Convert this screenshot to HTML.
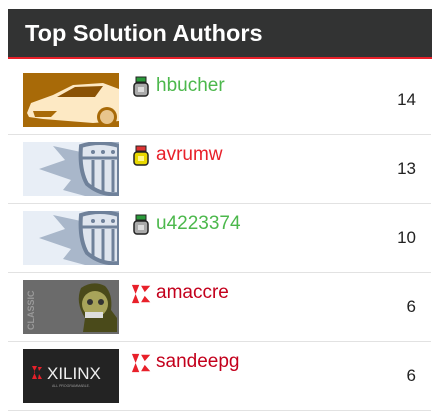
<!DOCTYPE html>
<html><head><style>
body{margin:0;width:441px;height:413px;background:#fff;position:relative;overflow:hidden;font-family:"Liberation Sans",sans-serif}
.hd{position:absolute;left:8px;top:9px;width:424px;height:48px;background:#323333;border-bottom:2px solid #e8202a}
.hd span{position:absolute;left:17px;top:11px;color:#fff;font-weight:bold;font-size:23.5px}
.row{position:absolute;left:8px;width:423px;height:69px;border-bottom:1px solid #e2e2e2}
.av{position:absolute;left:15px;top:8px;width:96px;height:54px;overflow:hidden}
.ic{position:absolute;left:123px;top:11px;width:20px;height:22px}
.nm{position:absolute;left:148px;top:10px;font-size:19px}
.n{position:absolute;right:15px;top:25px;font-size:17px;color:#222}
</style></head><body>
<div class="hd"><span>Top Solution Authors</span></div>

<div class="row" style="top:65px">
<div class="av" style="background:#a86a08"><svg width="96" height="54"><path d="M4 40 L8 30 L30 22 L50 12 L80 10 L96 16 L96 48 L70 50 L20 46 L6 44 Z" fill="#fde9c4"/><path d="M34 24 L52 14 L80 13 L72 24 Z" fill="#8a5205"/><circle cx="84" cy="44" r="10" fill="#a86a08"/><circle cx="84" cy="44" r="7" fill="#e8c58c"/><path d="M10 38 L34 38 L28 44 L12 44Z" fill="#a86a08"/></svg></div>
<svg class="ic" viewBox="0 0 20 22"><rect x="5" y="1" width="10" height="5" fill="#2a9a3a" stroke="#222"/><rect x="3" y="7" width="14" height="13" rx="3" fill="#aaa" stroke="#222" stroke-width="1.5"/><rect x="7" y="11" width="6" height="5" fill="#ddd"/></svg>
<div class="nm" style="color:#4cb84c">hbucher</div><div class="n">14</div></div>

<div class="row" style="top:134px">
<div class="av" style="background:#e8eef6"><svg width="96" height="54"><path d="M16 27 L42 18 L30 4 L58 10 L66 0 L96 0 L96 54 L62 54 L40 48 L48 38 Z" fill="#a9b7ca"/><path d="M58 4 Q77 -2 96 4 L96 52 Q78 54 64 42 Q56 28 58 4Z" fill="#dfe5ee" stroke="#6f819a" stroke-width="4"/><path d="M58 16 L96 16" stroke="#6f819a" stroke-width="3"/><path d="M70 18 V46 M80 18 V50 M90 18 V50" stroke="#6f819a" stroke-width="3"/><circle cx="70" cy="10" r="2" fill="#6f819a"/><circle cx="80" cy="10" r="2" fill="#6f819a"/><circle cx="90" cy="10" r="2" fill="#6f819a"/></svg></div>
<svg class="ic" viewBox="0 0 20 22"><rect x="5" y="1" width="10" height="5" fill="#d33" stroke="#222"/><rect x="3" y="7" width="14" height="13" rx="3" fill="#e8d800" stroke="#222" stroke-width="1.5"/><rect x="7" y="11" width="6" height="5" fill="#fff68a"/></svg>
<div class="nm" style="color:#e8202a">avrumw</div><div class="n">13</div></div>

<div class="row" style="top:203px">
<div class="av" style="background:#e8eef6"><svg width="96" height="54"><path d="M16 27 L42 18 L30 4 L58 10 L66 0 L96 0 L96 54 L62 54 L40 48 L48 38 Z" fill="#a9b7ca"/><path d="M58 4 Q77 -2 96 4 L96 52 Q78 54 64 42 Q56 28 58 4Z" fill="#dfe5ee" stroke="#6f819a" stroke-width="4"/><path d="M58 16 L96 16" stroke="#6f819a" stroke-width="3"/><path d="M70 18 V46 M80 18 V50 M90 18 V50" stroke="#6f819a" stroke-width="3"/><circle cx="70" cy="10" r="2" fill="#6f819a"/><circle cx="80" cy="10" r="2" fill="#6f819a"/><circle cx="90" cy="10" r="2" fill="#6f819a"/></svg></div>
<svg class="ic" viewBox="0 0 20 22"><rect x="5" y="1" width="10" height="5" fill="#2a9a3a" stroke="#222"/><rect x="3" y="7" width="14" height="13" rx="3" fill="#aaa" stroke="#222" stroke-width="1.5"/><rect x="7" y="11" width="6" height="5" fill="#ddd"/></svg>
<div class="nm" style="color:#4cb84c">u4223374</div><div class="n">10</div></div>

<div class="row" style="top:272px">
<div class="av" style="background:#6b6b6b"><svg width="96" height="54"><text x="-50" y="11" transform="rotate(-90)" fill="#999" font-size="9" font-weight="bold" font-family="Liberation Sans">CLASSIC</text><path d="M58 8 Q70 0 82 6 Q90 14 88 30 L94 38 L94 52 L60 52 L62 38 Q52 22 58 8Z" fill="#4a4a1a"/><ellipse cx="72" cy="24" rx="13" ry="13" fill="#a8a45a"/><rect x="62" y="32" width="18" height="6" fill="#ddd"/><circle cx="67" cy="22" r="3" fill="#333"/><circle cx="78" cy="22" r="3" fill="#333"/></svg></div>
<svg class="ic" viewBox="0 0 24 24" style="width:22px;height:22px"><path d="M1 2 L9 2 L5 12 L9 22 L1 22 L5 12Z" fill="#e8202a"/><path d="M11 3 L21 3 L15 10Z M15 14 L21 21 L11 21Z" fill="#e8202a"/></svg>
<div class="nm" style="color:#c3001c">amaccre</div><div class="n">6</div></div>

<div class="row" style="top:341px">
<div class="av" style="background:#232323"><svg width="96" height="54"><path d="M9 17 L14 17 L11 23 L14 30 L9 30 L12 23Z" fill="#e8202a"/><path d="M15 18 L19 18 L16 22Z M16 25 L19 30 L15 30Z" fill="#e8202a"/><text x="24" y="30" fill="#eee" font-size="17" font-family="Liberation Sans">XILINX</text><text x="29" y="38" fill="#999" font-size="3.5" font-family="Liberation Sans">ALL PROGRAMMABLE.</text></svg></div>
<svg class="ic" viewBox="0 0 24 24" style="width:22px;height:22px"><path d="M1 2 L9 2 L5 12 L9 22 L1 22 L5 12Z" fill="#e8202a"/><path d="M11 3 L21 3 L15 10Z M15 14 L21 21 L11 21Z" fill="#e8202a"/></svg>
<div class="nm" style="color:#c3001c">sandeepg</div><div class="n">6</div></div>
</body></html>
